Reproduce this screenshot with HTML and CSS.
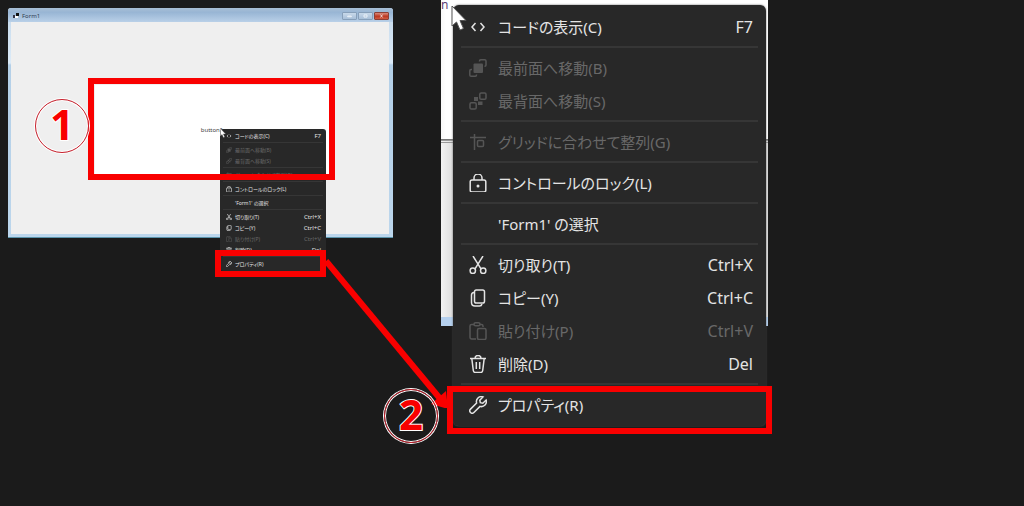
FILE: index.html
```html
<!DOCTYPE html>
<html lang="ja">
<head>
<meta charset="utf-8">
<meta name="viewport" content="width=device-width, initial-scale=1">
<title>Form1</title>
<link rel="stylesheet" href="styles.css">
</head>
<body>
<svg class="defs" aria-hidden="true">
  <symbol id="code" viewBox="0 0 18 18"><path d="M6.5 5 3 9l3.500 4M11.500 5 15 9l-3.500 4"/></symbol>
  <symbol id="front" viewBox="0 0 18 18"><rect class="solid" x="4.500" y="4.500" width="9.500" height="9.500" rx="1"/><path d="M10.500 2.500V2q0-1.200 1.200-1.200h4q1.300 0 1.300 1.300v4q0 1.200-1.200 1.200H15.500M3 10.500H2q-1.200 0-1.200 1.200v4.200q0 1.300 1.300 1.300h4.200q1.200 0 1.200-1.200V15.500"/></symbol>
  <symbol id="back" viewBox="0 0 18 18"><path class="solid" d="M5 5h4v4.500h4.500V13H9V9H5z"/><rect x="10.800" y="1" width="6.200" height="6.200" rx="1.300"/><rect x="1" y="10.800" width="6.200" height="6.200" rx="1.300"/></symbol>
  <symbol id="grid" viewBox="0 0 18 18"><path d="M5.500 1v16M1 4.500h16"/><rect x="8.500" y="7.500" width="6" height="6" rx="1"/></symbol>
  <symbol id="lock" viewBox="0 0 18 18"><rect x="1.200" y="6" width="15.600" height="12" rx="1.800"/><path d="M5 6V4a4 4 0 0 1 8 0v2"/><circle class="solid" cx="9" cy="12" r="1.500"/></symbol>
  <symbol id="cut" viewBox="0 0 18 18"><path d="m4 0 8 12.800M14 0 6 12.800"/><circle cx="3.800" cy="14.800" r="2.700"/><circle cx="14.200" cy="14.800" r="2.700"/></symbol>
  <symbol id="copy" viewBox="0 0 18 18"><rect x="5.500" y="1" width="10" height="13" rx="1.800"/><path d="M5 3.500q-2.500.2-2.500 2.500v7.500q0 3.500 3.500 3.500h4.500q2 0 2.500-2"/></symbol>
  <symbol id="paste" viewBox="0 0 18 18"><path d="M7 17H2.700q-1.700 0-1.700-1.700V4q0-1.600 1.600-1.600H5M11 2.400h1.500q1.500 0 1.500 1.500V5"/><rect x="5" y=".8" width="6" height="3" rx="1.500"/><rect x="8.500" y="6.500" width="8.500" height="11" rx="1.500"/></symbol>
  <symbol id="trash" viewBox="0 0 18 18"><path d="M1 3.500h16M6 3.500q0-3 3-3t3 3M2.800 3.500l1.500 12q.3 2 2 2h5.400q1.700 0 2-2l1.500-12M7.300 7v7M10.700 7v7"/></symbol>
  <symbol id="wrench" viewBox="0 0 18 18"><path d="M14 .9A5 5 0 0 0 7.600 7L1.500 13.100a2.400 2.400 0 0 0 3.400 3.400L11 10.400A5 5 0 0 0 17.100 4L13.800 7.200l-2.500-.5-.5-2.500z"/></symbol>
  <symbol id="pointer" viewBox="0 0 16 26"><path class="arrow" d="M1 1v20l4.500-4 3.500 8 3.500-1.500L9 15.500h6z"/></symbol>
</svg>

<main class="board">
  <section class="window" aria-label="Form1">
    <header class="titlebar">
      <svg class="app-icon" viewBox="0 0 6 6" aria-hidden="true"><path d="M0 2h2v3H0z" fill="#334"/><path d="M3 0h3v3H3z" fill="#111"/><path d="M2 3h3v2H2z" fill="#fff"/></svg>
      <h1 class="title">Form1</h1>
      <button class="caption" aria-label="最小化"><svg viewBox="0 0 15 8"><path d="M5 4h5v1H5z"/></svg></button>
      <button class="caption" aria-label="最大化"><svg viewBox="0 0 15 8"><path d="M5.500 2.500h4v3h-4z"/></svg></button>
      <button class="caption close" aria-label="閉じる"><svg viewBox="0 0 15 8"><path d="m6 2 3 4M9 2 6 6"/></svg></button>
    </header>
    <div class="client">
      <button class="form-button">button1</button>
    </div>
    <div class="menu small" role="menu">
      <button role="menuitem"><svg><use href="#code"/></svg><span>コードの表示(C)</span><kbd>F7</kbd></button>
      <hr>
      <button role="menuitem" disabled><svg><use href="#front"/></svg><span>最前面へ移動(B)</span></button>
      <button role="menuitem" disabled><svg><use href="#back"/></svg><span>最背面へ移動(S)</span></button>
      <hr>
      <button role="menuitem" disabled><svg><use href="#grid"/></svg><span>グリッドに合わせて整列(G)</span></button>
      <hr>
      <button role="menuitem"><svg><use href="#lock"/></svg><span>コントロールのロック(L)</span></button>
      <hr>
      <button role="menuitem"><svg></svg><span>'Form1' の選択</span></button>
      <hr>
      <button role="menuitem"><svg><use href="#cut"/></svg><span>切り取り(T)</span><kbd>Ctrl+X</kbd></button>
      <button role="menuitem"><svg><use href="#copy"/></svg><span>コピー(Y)</span><kbd>Ctrl+C</kbd></button>
      <button role="menuitem" disabled><svg><use href="#paste"/></svg><span>貼り付け(P)</span><kbd>Ctrl+V</kbd></button>
      <button role="menuitem"><svg><use href="#trash"/></svg><span>削除(D)</span><kbd>Del</kbd></button>
      <hr>
      <button role="menuitem"><svg><use href="#wrench"/></svg><span>プロパティ(R)</span></button>
    </div>
    <svg class="pointer pointer-small" aria-hidden="true"><use href="#pointer"/></svg>
  </section>

  <section class="detail" aria-label="メニューの拡大">
    <div class="backdrop-top"><span class="fragment">n</span></div>
    <div class="backdrop-bottom"></div>
    <div class="menu large" role="menu">
      <button role="menuitem"><svg><use href="#code"/></svg><span>コードの表示(C)</span><kbd>F7</kbd></button>
      <hr>
      <button role="menuitem" disabled><svg><use href="#front"/></svg><span>最前面へ移動(B)</span></button>
      <button role="menuitem" disabled><svg><use href="#back"/></svg><span>最背面へ移動(S)</span></button>
      <hr>
      <button role="menuitem" disabled><svg><use href="#grid"/></svg><span>グリッドに合わせて整列(G)</span></button>
      <hr>
      <button role="menuitem"><svg><use href="#lock"/></svg><span>コントロールのロック(L)</span></button>
      <hr>
      <button role="menuitem"><svg></svg><span>'Form1' の選択</span></button>
      <hr>
      <button role="menuitem"><svg><use href="#cut"/></svg><span>切り取り(T)</span><kbd>Ctrl+X</kbd></button>
      <button role="menuitem"><svg><use href="#copy"/></svg><span>コピー(Y)</span><kbd>Ctrl+C</kbd></button>
      <button role="menuitem" disabled><svg><use href="#paste"/></svg><span>貼り付け(P)</span><kbd>Ctrl+V</kbd></button>
      <button role="menuitem"><svg><use href="#trash"/></svg><span>削除(D)</span><kbd>Del</kbd></button>
      <hr>
      <button role="menuitem"><svg><use href="#wrench"/></svg><span>プロパティ(R)</span></button>
    </div>
    <svg class="pointer pointer-large" aria-hidden="true"><use href="#pointer"/></svg>
  </section>

  <div class="frame frame-button"></div>
  <div class="frame frame-item"></div>
  <div class="frame frame-detail"></div>
  <svg class="connector" viewBox="0 0 126 150" aria-hidden="true"><path class="shaft" d="M2 3 118 143"/><path class="head" d="m122 133 2 18-17-5z"/></svg>
  <div class="badge badge-one">1</div>
  <div class="badge badge-two">2</div>
</main>
</body>
</html>
```

FILE: styles.css
```css
* { box-sizing: border-box; }

body {
  margin: 0;
  background: #1b1b1b;
  font-family: "Noto Sans", "Noto Sans CJK JP", sans-serif;
}

button {
  border: 0;
  padding: 0;
  background: none;
  color: inherit;
  font: inherit;
}

.defs { position: absolute; width: 0; height: 0; }

.board {
  position: relative;
  display: flex;
  align-items: flex-start;
  gap: 48px;
  min-height: 100vh;
  overflow: hidden;
}

/* Form window */
.window {
  position: relative;
  display: flex;
  flex-direction: column;
  flex: none;
  width: 385px;
  height: 230px;
  margin: 8px 0 0 8px;
  padding: 0 4px 3px 3px;
  border-radius: 3px 3px 0 0;
  background: linear-gradient(#c4d8ea, #dcebf8 55px, #b4d0e8 57px, #bcd6ec);
  border-bottom: 1px solid #5b94ab;
}

.titlebar {
  display: flex;
  align-items: center;
  gap: 1px;
  height: 14px;
  margin: 0 -4px 0 -3px;
  padding: 1px 4px 0 5px;
  border-radius: 3px 3px 0 0;
  background: linear-gradient(#a9bfd5, #98b5d4 30%, #b9d0e8);
}

.app-icon { width: 6px; height: 6px; }

.title {
  flex: 1;
  margin: 0 0 0 2px;
  font-size: 6px;
  font-weight: 400;
  line-height: 8px;
  color: #2d3c50;
}

.caption {
  display: flex;
  width: 15px;
  height: 8px;
  border: 1px solid #879fb9;
  border-radius: 1px;
  background: linear-gradient(#c8d9ea, #a8bfd8);
}

.caption svg { width: 100%; height: 100%; fill: none; stroke: #f5f9fd; }
.close { border-color: #8d4038; background: linear-gradient(#d98b7c, #bd3822 55%, #d05b42); }

.client {
  flex: 1;
  padding: 63px 60px 60px 84px;
  background: #efefef;
}

.form-button {
  width: 100%;
  height: 89px;
  background: #fff;
  color: #444;
  font-size: 6px;
  line-height: 8px;
}

/* Enlarged view */
.detail {
  position: relative;
  flex: none;
  width: 327px;
}

.backdrop-top {
  height: 140px;
  background: linear-gradient(90deg, #f8f8f8, #fff 5px);
  border-bottom: 1px solid #777;
}

.fragment {
  display: block;
  color: #5d3f74;
  font-size: 12px;
  line-height: 10px;
}

.backdrop-bottom {
  height: 186px;
  border-top: 3px double #999;
  border-bottom: 9px solid #b5d0ee;
  background: linear-gradient(90deg, #f2f2f2, #dedede 12px);
}

/* Context menus */
.menu {
  position: absolute;
  display: flex;
  flex-direction: column;
  background: #282828;
  color: #e4e4e4;
  font-feature-settings: "palt";
}

.menu button { display: flex; align-items: center; text-align: left; white-space: nowrap; }
.menu button:disabled { color: #686868; }
.menu span { flex: 1; }
.menu kbd { font-family: inherit; }
.menu hr { width: auto; border: 0; background: #363636; }
.menu svg { flex: none; fill: none; stroke: currentColor; overflow: visible; }
.menu :disabled svg { color: #555; }
.solid { fill: currentColor; stroke: none; }

.large {
  top: 5px;
  left: 12px;
  right: 2px;
  padding: 5px 0;
  border-radius: 6px;
  box-shadow: 0 0 2px #555;
  font-size: 15px;
}

.large kbd { font-size: 16px; }
.large button { height: 33px; gap: 11px; padding: 0 13px 0 16px; }
.large hr { height: 2px; margin: 3px 8px; }
.large svg { width: 18px; height: 18px; stroke-width: 1.500; }

.small {
  top: 121px;
  left: 212px;
  width: 106px;
  padding: 1px 0 2px;
  border-radius: 3px;
  font-size: 5px;
}

.small kbd { font-size: 6px; }
.small button { height: 11px; gap: 3px; padding: 0 5px 0 6px; }
.small hr { height: 1px; margin: 1px 3px; }
.small svg { width: 6px; height: 6px; stroke-width: 2; }

.pointer { position: absolute; }
.arrow { fill: #fff; stroke: #555; stroke-width: 1; }
.pointer-small { left: 212px; top: 120px; width: 6px; height: 10px; }
.pointer-large { left: 10px; top: 5px; width: 16px; height: 26px; }

/* Annotations */
.frame { position: absolute; border: 6px solid #f90000; }
.frame-button { left: 88px; top: 78px; width: 247px; height: 102px; }
.frame-item { left: 215px; top: 250px; width: 111px; height: 27px; }
.frame-detail { left: 447px; top: 386px; width: 325px; height: 48px; }

.connector { position: absolute; left: 324px; top: 258px; width: 126px; height: 150px; }
.shaft { stroke: #f90000; stroke-width: 6; }
.head { fill: #f90000; }

.badge {
  position: absolute;
  width: 54px;
  height: 54px;
  border: 1px solid #c8202c;
  border-radius: 50%;
  color: #f90000;
  font-family: "Noto Sans", sans-serif;
  font-size: 42px;
  font-weight: 700;
  line-height: 48px;
  text-align: center;
  -webkit-text-stroke: 2px #fff;
  paint-order: stroke fill;
  box-shadow: 0 0 0 1px #fff, inset 0 0 0 1px #fff;
}

.badge-one { left: 35px; top: 99px; }
.badge-two { left: 384px; top: 389px; }
```
